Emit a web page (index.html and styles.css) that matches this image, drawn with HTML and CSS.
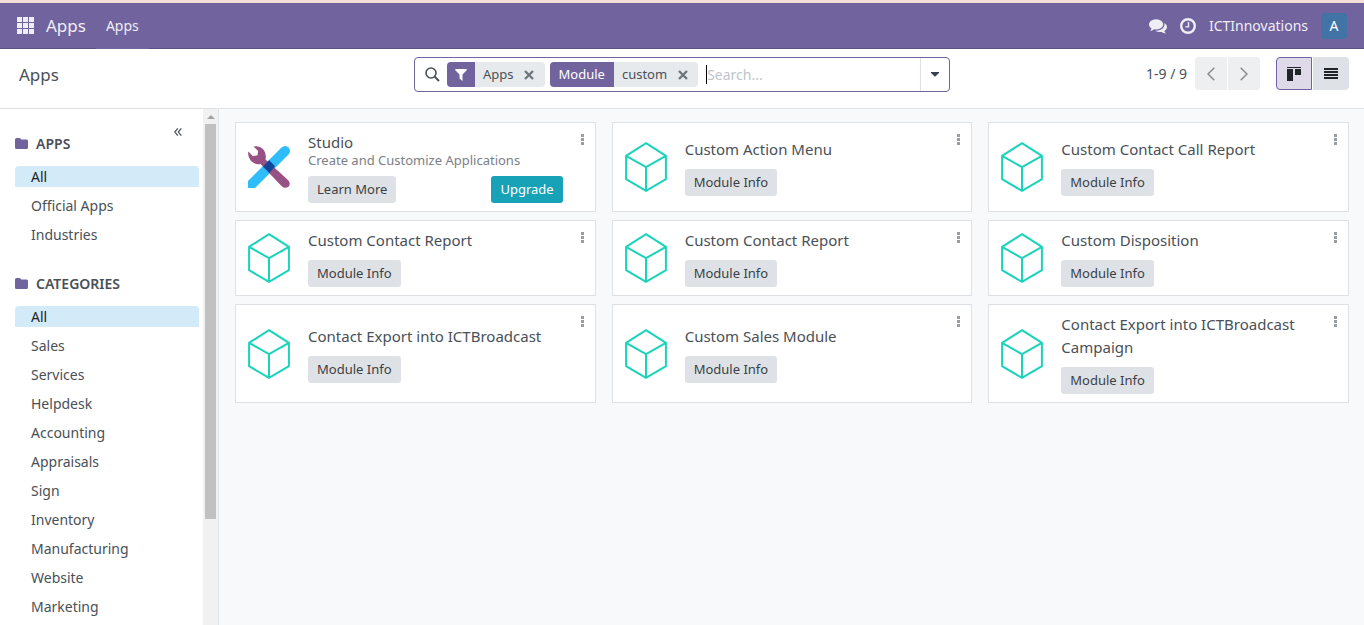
FILE: index.html
```html
<!DOCTYPE html>
<html lang="en">
<head>
<meta charset="utf-8">
<meta name="viewport" content="width=device-width, initial-scale=1">
<title>Apps</title>
<link rel="stylesheet" href="styles.css">
</head>
<body>
<svg class="defs" aria-hidden="true">
  <symbol id="cube" viewBox="0 0 42 50"><path d="M21 1.2 40.9 13.8V37.2L21 48.8 1.1 37.2V13.8ZM1.1 13.8 21 25.2 40.9 13.8M21 25.2V48.8" fill="none" stroke="#1ad3bb" stroke-width="2"/></symbol>
  <symbol id="dots" viewBox="0 0 3 11"><path d="M0 0h3v3H0zM0 4h3v3H0zM0 8h3v3H0z" fill="#999ca0"/></symbol>
  <symbol id="folder" viewBox="0 0 13 11"><path d="M0 1.5Q0 0 1.500 0H4.500Q6 0 6 1.500H11.500Q13 1.500 13 3V9.500Q13 11 11.500 11H1.500Q0 11 0 9.500Z" fill="#71639e"/></symbol>
  <symbol id="cross" viewBox="0 0 10 10"><path d="M1 1 9 9M9 1 1 9" fill="none" stroke="#6c757d" stroke-width="2.300"/></symbol>
</svg>

<header class="navbar">
  <button class="nav-grid" aria-label="Home menu"><svg width="17" height="17" viewBox="0 0 17 17"><path d="M0 0h5v5H0zM6 0h5v5H6zM12 0h5v5h-5zM0 6h5v5H0zM6 6h5v5H6zM12 6h5v5h-5zM0 12h5v5H0zM6 12h5v5H6zM12 12h5v5h-5z" fill="currentColor"/></svg></button>
  <a class="nav-brand" href="#">Apps</a>
  <a class="nav-tab" href="#">Apps</a>
  <div class="nav-right">
    <button class="nav-icon" aria-label="Messages"><svg width="18" height="16" viewBox="0 0 1792 1600"><path d="M1408 640q0 139-94 257t-256.500 186.500-353.500 68.500q-86 0-176-16-124 88-278 128-36 9-86 16h-3q-11 0-20.500-8t-11.500-21q-1-3-1-6.500t.5-6.500 2-6l2.500-5 3.500-5.500 4-5 4.500-5 4-4.500q5-6 23-25t26-29.500 22.500-29 25-38.500 20.500-44q-124-72-195-177t-71-224q0-139 94-257t256.500-186.500 353.500-68.500 353.500 68.500 256.500 186.500 94 257zm384 256q0 120-71 224.500t-195 176.500q10 24 20.500 44t25 38.500 22.500 29 26 29.500 23 25q1 1 4 4.500t4.500 5 4 5 3.500 5.500l2.500 5 2 6 .5 6.500-1 6.500q-3 14-13 22t-22 7q-50-7-86-16-154-40-278-128-90 16-176 16-271 0-472-132 58 4 88 4 161 0 309-45t264-129q125-92 192-212t67-254q0-77-23-152 129 71 204 178t75 230z" fill="currentColor"/></svg></button>
    <button class="nav-icon" aria-label="Activities"><svg width="16" height="16" viewBox="0 0 16 16"><circle cx="8" cy="8" r="6.800" fill="none" stroke="currentColor" stroke-width="2.400"/><path d="M8.500 4V8.900H5.300" fill="none" stroke="currentColor" stroke-width="1.400"/></svg></button>
    <a class="nav-user" href="#">ICTInnovations</a>
    <span class="avatar">A</span>
  </div>
</header>

<section class="control-panel">
  <h1 class="page-title">Apps</h1>
  <div class="search">
    <svg class="search-icon" width="15" height="15" viewBox="0 0 15 15"><circle cx="6" cy="6" r="5" fill="none" stroke="#495057" stroke-width="1.600"/><path d="M9.600 9.600 14 14" stroke="#495057" stroke-width="2"/></svg>
    <div class="facet">
      <span class="facet-label facet-filter"><svg width="12" height="12" viewBox="0 0 12 12"><path d="M.3 0H11.700V1.200L7.500 5.500V12L4.500 9.500V5.500L.3 1.200Z" fill="#fff"/></svg></span>
      <span class="facet-value">Apps</span>
      <button class="facet-remove" aria-label="Remove Apps"><svg width="10" height="10"><use href="#cross"/></svg></button>
    </div>
    <div class="facet">
      <span class="facet-label">Module</span>
      <span class="facet-value">custom</span>
      <button class="facet-remove" aria-label="Remove Module"><svg width="10" height="10"><use href="#cross"/></svg></button>
    </div>
    <span class="caret"></span>
    <input class="search-input" type="text" placeholder="Search..." aria-label="Search">
    <button class="search-toggle" aria-label="Search options"><svg width="8" height="5" viewBox="0 0 8 5"><path d="M0 0H8V1L4 4.800 0 1Z" fill="#374151"/></svg></button>
  </div>
  <div class="panel-right">
    <span class="pager-text">1-9 / 9</span>
    <div class="btn-pair">
      <button class="pager-btn first" aria-label="Previous"><svg width="8" height="14" viewBox="0 0 8 14"><path d="M7.300.7 1 7 7.300 13.300" fill="none" stroke="#888b8e" stroke-width="1.500"/></svg></button>
      <button class="pager-btn last" aria-label="Next"><svg width="8" height="14" viewBox="0 0 8 14"><path d="M.7.7 7 7 .7 13.300" fill="none" stroke="#888b8e" stroke-width="1.500"/></svg></button>
    </div>
    <div class="btn-pair views">
      <button class="view-btn active first" aria-label="Kanban view"><svg width="14" height="14" viewBox="0 0 14 14"><path d="M0 0h14v1H0zM0 2h6v12H0zM8 2h6v6H8z" fill="#212529"/></svg></button>
      <button class="view-btn last" aria-label="List view"><svg width="14" height="11" viewBox="0 0 14 11"><path d="M0 0h14v2H0zM0 3h14v2H0zM0 6h14v2H0zM0 9h14v2H0z" fill="#212529"/></svg></button>
    </div>
  </div>
</section>

<div class="workspace">
  <aside class="sidebar">
    <div class="sidebar-content">
      <button class="collapse" aria-label="Collapse panel"><svg width="8" height="8" viewBox="0 0 8 8"><path d="M3.800.4.8 4l3 3.600M7.300.4 4.300 4l3 3.600" fill="none" stroke="#495057" stroke-width="1.200"/></svg></button>
      <h2 class="side-title"><svg width="13" height="11"><use href="#folder"/></svg>APPS</h2>
      <ul class="side-list">
        <li><a class="selected" href="#">All</a></li>
        <li><a href="#">Official Apps</a></li>
        <li><a href="#">Industries</a></li>
      </ul>
      <h2 class="side-title"><svg width="13" height="11"><use href="#folder"/></svg>CATEGORIES</h2>
      <ul class="side-list">
        <li><a class="selected" href="#">All</a></li>
        <li><a href="#">Sales</a></li>
        <li><a href="#">Services</a></li>
        <li><a href="#">Helpdesk</a></li>
        <li><a href="#">Accounting</a></li>
        <li><a href="#">Appraisals</a></li>
        <li><a href="#">Sign</a></li>
        <li><a href="#">Inventory</a></li>
        <li><a href="#">Manufacturing</a></li>
        <li><a href="#">Website</a></li>
        <li><a href="#">Marketing</a></li>
      </ul>
    </div>
    <div class="scrollbar"><svg width="8" height="4" viewBox="0 0 8 4"><path d="M4 0 8 4H0Z" fill="#a3a3a3"/></svg><div class="thumb"></div></div>
  </aside>

  <main class="kanban">
    <article class="card">
      <svg class="card-icon" width="42" height="42" viewBox="0 0 42 42"><path d="M0 35 33.500 1.500Q37.500-1.500 40.500 1.500 43.500 5 40.500 8.500L7 42H0Z" fill="#2ebcfa"/><path d="M5.500.6Q11-.8 15 3 19 7.500 17.500 13.500L40.500 34.500Q43 38 40.500 40.800 37 43 34 40.500L12.500 18Q7 19 3 15 -.5 11 .2 5.500L5 10.200 9.500 9.300 10.200 5Z" fill="#985184"/><path d="M21.200 14.200 27 20.200 21.500 27 15 20.400Z" fill="#144496"/></svg>
      <div class="card-body">
        <h3 class="card-title">Studio</h3>
        <p class="card-sub">Create and Customize Applications</p>
        <div class="card-actions"><button class="btn">Learn More</button><button class="btn btn-upgrade">Upgrade</button></div>
      </div>
      <button class="card-menu" aria-label="Menu"><svg width="3" height="11"><use href="#dots"/></svg></button>
    </article>
    <article class="card">
      <svg class="card-icon" width="42" height="50"><use href="#cube"/></svg>
      <div class="card-body"><h3 class="card-title">Custom Action Menu</h3><div class="card-actions"><button class="btn">Module Info</button></div></div>
      <button class="card-menu" aria-label="Menu"><svg width="3" height="11"><use href="#dots"/></svg></button>
    </article>
    <article class="card">
      <svg class="card-icon" width="42" height="50"><use href="#cube"/></svg>
      <div class="card-body"><h3 class="card-title">Custom Contact Call Report</h3><div class="card-actions"><button class="btn">Module Info</button></div></div>
      <button class="card-menu" aria-label="Menu"><svg width="3" height="11"><use href="#dots"/></svg></button>
    </article>
    <article class="card">
      <svg class="card-icon" width="42" height="50"><use href="#cube"/></svg>
      <div class="card-body"><h3 class="card-title">Custom Contact Report</h3><div class="card-actions"><button class="btn">Module Info</button></div></div>
      <button class="card-menu" aria-label="Menu"><svg width="3" height="11"><use href="#dots"/></svg></button>
    </article>
    <article class="card">
      <svg class="card-icon" width="42" height="50"><use href="#cube"/></svg>
      <div class="card-body"><h3 class="card-title">Custom Contact Report</h3><div class="card-actions"><button class="btn">Module Info</button></div></div>
      <button class="card-menu" aria-label="Menu"><svg width="3" height="11"><use href="#dots"/></svg></button>
    </article>
    <article class="card">
      <svg class="card-icon" width="42" height="50"><use href="#cube"/></svg>
      <div class="card-body"><h3 class="card-title">Custom Disposition</h3><div class="card-actions"><button class="btn">Module Info</button></div></div>
      <button class="card-menu" aria-label="Menu"><svg width="3" height="11"><use href="#dots"/></svg></button>
    </article>
    <article class="card">
      <svg class="card-icon" width="42" height="50"><use href="#cube"/></svg>
      <div class="card-body"><h3 class="card-title">Contact Export into ICTBroadcast</h3><div class="card-actions"><button class="btn">Module Info</button></div></div>
      <button class="card-menu" aria-label="Menu"><svg width="3" height="11"><use href="#dots"/></svg></button>
    </article>
    <article class="card">
      <svg class="card-icon" width="42" height="50"><use href="#cube"/></svg>
      <div class="card-body"><h3 class="card-title">Custom Sales Module</h3><div class="card-actions"><button class="btn">Module Info</button></div></div>
      <button class="card-menu" aria-label="Menu"><svg width="3" height="11"><use href="#dots"/></svg></button>
    </article>
    <article class="card">
      <svg class="card-icon" width="42" height="50"><use href="#cube"/></svg>
      <div class="card-body"><h3 class="card-title">Contact Export into ICTBroadcast Campaign</h3><div class="card-actions"><button class="btn">Module Info</button></div></div>
      <button class="card-menu" aria-label="Menu"><svg width="3" height="11"><use href="#dots"/></svg></button>
    </article>
  </main>
</div>
</body>
</html>
```

FILE: styles.css
```css
* { box-sizing: border-box; }

body {
  margin: 0;
  height: 100vh;
  display: flex;
  flex-direction: column;
  overflow: hidden;
  background: #fff;
  color: #495057;
  font: 14px/21px "Noto Sans", sans-serif;
}

h1, h2, h3, p, ul { margin: 0; padding: 0; font-weight: 400; }
ul { list-style: none; }
a { color: inherit; text-decoration: none; }
svg { display: block; flex: none; }
button {
  display: flex;
  align-items: center;
  justify-content: center;
  margin: 0;
  padding: 0;
  border: 0;
  background: none;
  color: inherit;
  font: inherit;
}
.defs { position: absolute; width: 0; height: 0; }

/* Top bar */
.navbar {
  flex: none;
  display: flex;
  height: 49px;
  padding: 0 17px;
  border-top: 3px solid #f3dfd8;
  background: linear-gradient(#71639e, #71639e) 0 0 / 100% 45px no-repeat #5a4f7f;
  color: #f0eef5;
}
.nav-grid { width: 17px; margin: 0 12px 1px 0; }
.nav-brand { padding-right: 10px; font-size: 17px; line-height: 46px; }
.nav-tab { padding: 0 10px; background: #71639e; line-height: 46px; }
.nav-right { display: flex; align-items: center; margin: 0 0 1px auto; }
.nav-icon { margin-right: 13px; }
.nav-user { margin-right: 13px; }
.avatar {
  width: 26px;
  height: 26px;
  border-radius: 4px;
  background: #4273a5;
  color: #fff;
  line-height: 26px;
  text-align: center;
}

/* Control panel */
.control-panel {
  flex: none;
  display: grid;
  grid-template-columns: 1fr 536px 1fr;
  height: 60px;
  padding: 8px 15px 0;
  border-bottom: 1px solid #dee2e6;
}
.page-title { padding-left: 4px; font-size: 17px; line-height: 35px; }
.search {
  display: flex;
  align-items: center;
  height: 35px;
  padding-left: 10px;
  border: 1px solid #71639e;
  border-radius: 4px;
}
.search-icon { margin-right: 7px; }
.facet {
  display: flex;
  height: 25px;
  margin-right: 5px;
  border-radius: 4px;
  overflow: hidden;
  background: #e7eaed;
  font-size: 13px;
  line-height: 24px;
}
.facet-label { padding: 0 9px; background: #71639e; color: #fff; }
.facet-filter { display: flex; align-items: center; padding: 0 8px; }
.facet-value { padding-left: 8px; }
.facet-remove { width: 31px; }
.caret { width: 1px; height: 19px; margin-left: 3px; background: #000; }
.search-input {
  flex: 1;
  min-width: 0;
  height: 33px;
  padding: 0;
  border: 0;
  outline: 0;
  background: none;
  font: inherit;
}
.search-input::placeholder { color: #c0c4c9; opacity: 1; }
.search-toggle { width: 29px; height: 33px; border-left: 1px solid #dee2e6; }
.panel-right { display: flex; justify-content: flex-end; }
.pager-text { margin-right: 8px; line-height: 34px; }
.btn-pair { display: flex; gap: 1px; height: 33px; }
.views { margin-left: 16px; }
.pager-btn { width: 32px; background: #eeeff1; }
.view-btn { width: 36px; background: #dee2e6; }
.view-btn.active { border: 1px solid #71639e; background: #dedae8; }
.first { border-radius: 4px 0 0 4px; }
.last { border-radius: 0 4px 4px 0; }

/* Sidebar */
.workspace { flex: 1; display: flex; min-height: 0; }
.sidebar { flex: none; display: flex; width: 219px; border-right: 1px solid #dee2e6; overflow: hidden; }
.sidebar-content { position: relative; flex: 1; padding: 24px 4px 0 15px; }
.collapse { position: absolute; top: 19px; right: 21px; }
.side-title {
  display: flex;
  align-items: center;
  gap: 8px;
  margin-bottom: 12px;
  font-size: 14px;
  font-weight: 600;
}
.side-list { display: grid; gap: 8px; margin-bottom: 28px; }
.side-list a { display: block; padding-left: 16px; }
.side-list .selected { border-radius: 4px 4px 0 0; background: #d3eaf8; color: #212529; }
.scrollbar {
  display: flex;
  flex-direction: column;
  align-items: center;
  width: 15px;
  padding-top: 6px;
  gap: 5px;
  background: #f1f1f1;
}
.thumb { width: 11px; height: 395px; background: #c1c1c1; }

/* Cards */
.kanban {
  flex: 1;
  display: grid;
  grid-template-columns: repeat(3, minmax(0, 1fr));
  align-content: start;
  gap: 8px 16px;
  padding: 13px 15px 16px 16px;
  background: #f8f9fb;
}
.card {
  position: relative;
  display: flex;
  align-items: center;
  gap: 18px;
  padding: 8px 32px 8px 12px;
  border: 1px solid #dee2e6;
  background: #fff;
}
.card-body { flex: 1; }
.card-title { font-size: 15px; line-height: 23px; }
.card-sub { padding-bottom: 2px; color: #7b8086; font-size: 13px; line-height: 12px; }
.card-actions { display: flex; justify-content: space-between; margin-top: 8px; }
.btn {
  height: 27px;
  padding: 0 9px;
  border-radius: 3px;
  background: #dee2e6;
  color: #3b3f45;
  font-size: 13px;
}
.btn-upgrade { background: #17a2b8; color: #fff; }
.card-menu { position: absolute; top: 11px; right: 11px; }
```
